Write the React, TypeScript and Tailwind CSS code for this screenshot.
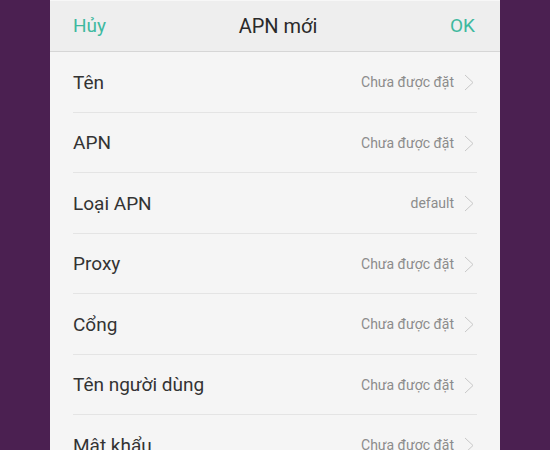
import React from "react";

const rows: [string, string][] = [
  ["Tên", "Chưa được đặt"],
  ["APN", "Chưa được đặt"],
  ["Loại APN", "default"],
  ["Proxy", "Chưa được đặt"],
  ["Cổng", "Chưa được đặt"],
  ["Tên người dùng", "Chưa được đặt"],
  ["Mật khẩu", "Chưa được đặt"],
];

function Chevron() {
  return (
    <svg width="10" height="17" viewBox="0 0 10 17" className="shrink-0">
      <path d="M1 1 L9 8.5 L1 16" fill="none" stroke="#c8c8c8" strokeWidth="1" />
    </svg>
  );
}

export default function App() {
  return (
    <div
      className="w-[550px] h-[450px] overflow-hidden bg-[#4b2051] flex justify-center"
      style={{ fontFamily: "Roboto, 'Noto Sans', sans-serif" }}
    >
      <div className="w-[450px] h-full bg-[#f5f5f5] flex flex-col overflow-hidden">
        <div className="h-[52px] shrink-0 bg-[#eeeeee] border-t border-t-[#f7f7f7] border-b border-b-[#d6d6d6] flex items-center justify-between pl-[23px] pr-[25px]">
          <span className="text-[19px] text-[#3fb99f]">Hủy</span>
          <span className="text-[20px] text-[#2a2a2a]">APN mới</span>
          <span className="text-[19px] text-[#3fb99f]">OK</span>
        </div>
        {rows.map(([label, value]) => (
          <div key={label} className="h-[60.5px] shrink-0 px-[23px]">
            <div className="h-full border-b border-[#e4e4e4] flex items-center justify-between pt-[2px]">
              <span className="text-[19px] text-[#333333]">{label}</span>
              <div className="flex items-center gap-[10px] pr-[3px]">
                <span className="text-[14px] text-[#8c8c8c]">{value}</span>
                <Chevron />
              </div>
            </div>
          </div>
        ))}
      </div>
    </div>
  );
}
